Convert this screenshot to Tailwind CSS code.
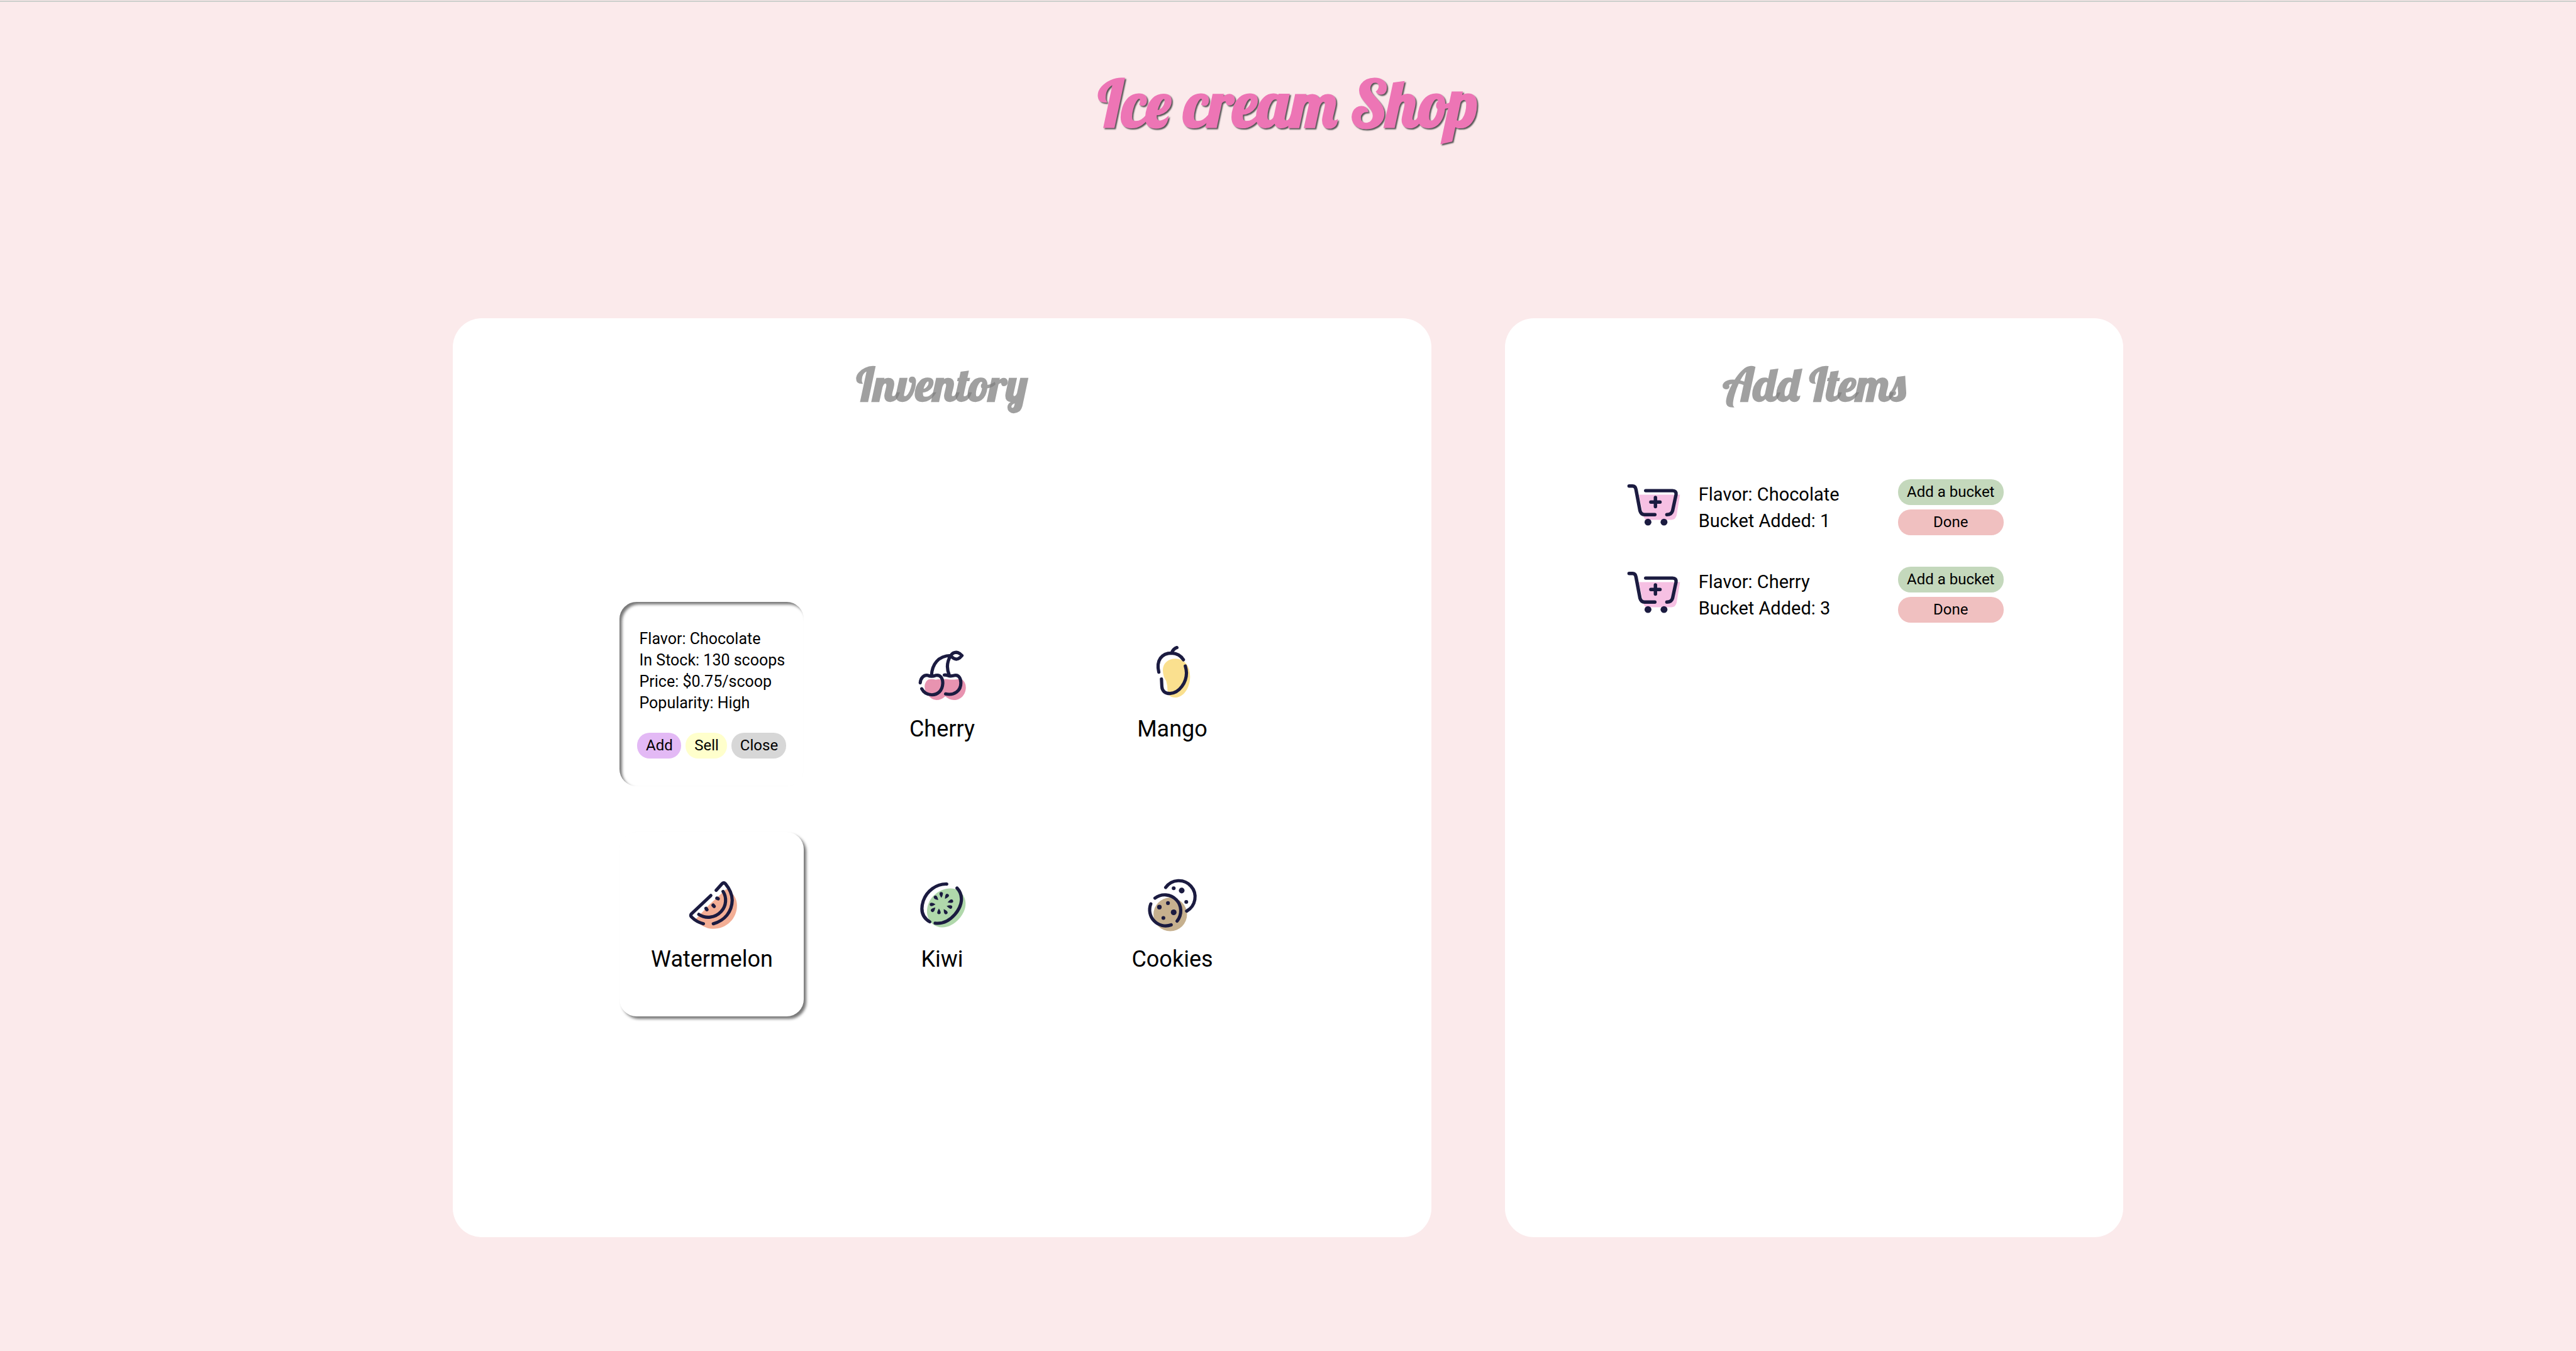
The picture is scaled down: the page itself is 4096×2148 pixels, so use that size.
<!DOCTYPE html>
<html lang="en">
<head>
<meta charset="utf-8">
<title>Ice cream Shop</title>
<script src="https://cdn.jsdelivr.net/npm/@tailwindcss/browser@4"></script>
</head>
<body class="min-h-screen bg-[#fbeaeb] font-[Roboto,sans-serif] text-black">
<div class="mt-px h-0.5 bg-[#cbcecb]"></div>
<header class="h-[503px] pt-[101px] text-center">
  <h1 class="font-[Lobster,'Liberation_Serif',serif] text-[102px] leading-[120px] font-bold text-[#ed75b5] [text-shadow:2px_2px_2px_#555]">Ice cream Shop</h1>
</header>
<main class="flex justify-center gap-[117px]">
  <section class="flex min-h-[68vh] w-[38%] flex-col items-center rounded-[46px] bg-white pt-[55px]">
    <h2 class="font-[Lobster,'Liberation_Serif',serif] text-[73px] leading-[100px] font-bold text-[#808080]/75">Inventory</h2>
    <div class="mt-[296px] grid grid-cols-[repeat(3,293px)] gap-[73px]">
      <article class="h-[293px] rounded-[27px] pt-[42px] shadow-[inset_4px_4px_4px_#777]">
        <div class="pl-[31px] text-[25px] leading-[34px]">
          <p>Flavor: Chocolate</p>
          <p>In Stock: 130 scoops</p>
          <p>Price: $0.75/scoop</p>
          <p>Popularity: High</p>
        </div>
        <div class="mt-[30px] flex gap-[7px] pl-7 text-[24px] leading-[41px]">
          <button class="h-[41px] w-[70px] rounded-[20px] bg-[#e3b9f5]">Add</button>
          <button class="h-[41px] w-[66px] rounded-[20px] bg-[#ffffcc]">Sell</button>
          <button class="h-[41px] w-[87px] rounded-[20px] bg-[#d7d7d7]">Close</button>
        </div>
      </article>
      <button class="flex h-[293px] flex-col items-center rounded-[27px] pt-[68px]">
        <svg class="size-[91px]" viewBox="144 62 300 300" fill="none" stroke="#1b1b40" stroke-width="17" stroke-linecap="round" stroke-linejoin="round">
          <path d="M225 244Q245 240 262 246Q280 240 295 246Q315 240 330 244Q348 246 378 243Q400 240 409 252Q421 268 420 290C418 326 392 352 358 352Q330 350 312 332Q292 352 266 352Q238 350 222 326Q204 306 204 280Q206 254 225 244Z" fill="#e893b0" stroke="none"/>
          <path d="M181 262C183 236 200 219 221 223Q240 232 262 223C288 217 300 240 299 266C297 302 274 325 242 325C218 324 198 311 189 293M307 221Q316 220 326 224Q340 229 362 223C382 219 394 238 394 262C394 305 358 330 314 320M240 224C243 165 275 120 341 119M334 224C318 187 320 152 341 119M341 119Q352 102 370 102Q387 103 400 119Q387 136 371 138Q354 137 341 119Z"/>
        </svg>
        <span class="mt-[21px] text-[36px] leading-[44px]">Cherry</span>
      </button>
      <button class="flex h-[293px] flex-col items-center rounded-[27px] pt-[68px]">
        <svg class="size-[91px]" viewBox="144 62 300 300" fill="none" stroke="#1b1b40" stroke-width="17" stroke-linecap="round" stroke-linejoin="round">
          <path d="M246 196C246 158 275 135 313 135C365 138 389 178 389 230C388 290 355 339 309 339C288 338 272 326 271 304Q271 276 264 253Q247 228 246 196Z" fill="#fae08f" stroke="none"/>
          <path d="M225 206C210 145 240 106 292 106C318 107 341 120 354 141M292 106Q300 84 320 77M239 242L241 281C242 306 260 318 283 318C334 316 370 258 370 210Q369 190 364 174"/>
        </svg>
        <span class="mt-[21px] text-[36px] leading-[44px]">Mango</span>
      </button>
      <button class="flex h-[293px] flex-col items-center rounded-[27px] pt-[68px] shadow-[4px_4px_4px_#777]">
        <svg class="size-[91px]" viewBox="384 272 300 300" fill="none" stroke="#1b1b40" stroke-width="17" stroke-linecap="round" stroke-linejoin="round">
          <path d="M612 345Q667 378 667 432C667 502 612 555 541 555Q485 552 450 505L520 430Z" fill="#f3ae95" stroke="none"/>
          <path d="M558 353L589 318Q598 310 606 318C628 345 642 374 642 405C641 465 603 512 543 528M530 380L427 478Q422 486 429 493Q456 520 491 528M594 359C614 390 612 435 584 464C552 498 504 503 467 479"/>
          <path d="M562 394L568 397M542 431L547 437M505 448L509 454" stroke-width="18"/>
        </svg>
        <span class="mt-[21px] text-[36px] leading-[44px]">Watermelon</span>
      </button>
      <button class="flex h-[293px] flex-col items-center rounded-[27px] pt-[68px]">
        <svg class="size-[91px]" viewBox="144 62 300 300" fill="none" stroke="#1b1b40" stroke-width="17" stroke-linecap="round" stroke-linejoin="round">
          <path d="M244 318C203 280 210 215 250 172C290 130 350 122 386 146C430 182 428 240 390 286C345 340 285 352 244 318Z" fill="#b0d8ab" stroke="none"/>
          <path d="M320 110C265 108 215 147 197 198C181 248 193 286 231 308M374 131C410 170 402 225 362 270C334 302 300 320 259 315"/>
          <g fill="#1b1b40" stroke="none">
            <path id="seed" d="M292 182Q282 168 282 161A9 9 0 0 1 300 161Q300 168 292 182Z"/>
            <use href="#seed" transform="rotate(36 292 214)"/>
            <use href="#seed" transform="translate(2 1) rotate(74 292 214)"/>
            <use href="#seed" transform="translate(-3 1) rotate(108 292 214)"/>
            <use href="#seed" transform="translate(-4 0) rotate(150 292 214)"/>
            <use href="#seed" transform="translate(-12 -8) rotate(182 292 214)"/>
            <use href="#seed" transform="translate(-9 -4) rotate(226 292 214)"/>
            <use href="#seed" transform="translate(1 2) rotate(270 292 214)"/>
            <use href="#seed" transform="translate(5 4) rotate(318 292 214)"/>
          </g>
        </svg>
        <span class="mt-[21px] text-[36px] leading-[44px]">Kiwi</span>
      </button>
      <button class="flex h-[293px] flex-col items-center rounded-[27px] pt-[68px]">
        <svg class="size-[91px]" viewBox="144 62 300 300" fill="none" stroke="#1b1b40" stroke-width="17" stroke-linecap="round" stroke-linejoin="round">
          <circle cx="285" cy="269" r="88" fill="#c6b08e" stroke="none"/>
          <path d="M261 128A85 85 0 1 1 371 252M205 184A84 84 0 0 1 321 304M183 214A84 84 0 0 0 290 324"/>
          <g fill="#1b1b40" stroke="none">
            <circle cx="303" cy="132" r="10"/><circle cx="345" cy="144" r="15"/><circle cx="369" cy="204" r="10"/>
            <circle cx="273" cy="210" r="10"/><circle cx="228" cy="231" r="12"/><circle cx="303" cy="258" r="15"/><circle cx="249" cy="288" r="10"/>
          </g>
        </svg>
        <span class="mt-[21px] text-[36px] leading-[44px]">Cookies</span>
      </button>
    </div>
  </section>

  <section class="flex min-h-[68vh] w-[24%] flex-col items-center rounded-[46px] bg-white pt-[55px]">
    <h2 class="font-[Lobster,'Liberation_Serif',serif] text-[73px] leading-[100px] font-bold text-[#808080]/75">Add Items</h2>
    <ul class="mt-[100px] flex w-[602px] flex-col gap-12">
      <li class="flex items-center">
        <svg class="size-[91px]" viewBox="0 0 100 100" fill="none" stroke="#1b1b40" stroke-width="6" stroke-linecap="round" stroke-linejoin="round">
          <path d="M24 28H96L90 64Q88 72 81 72H39Q34 72 32 66Z" fill="#f6c0e3" stroke="none"/>
          <path d="M7 13H13Q18 13 19 19L26 56Q28 63 34 63H52M36 21H83Q90 21 89 28L83 56Q81 63 73 63M45 41H61M53 33V49"/>
          <circle cx="40" cy="76" r="6" fill="#1b1b40" stroke="none"/><circle cx="68" cy="76" r="6" fill="#1b1b40" stroke="none"/>
        </svg>
        <div class="ml-[26px] flex-1 text-[29px] leading-[42px]">
          <p>Flavor: Chocolate</p>
          <p>Bucket Added: 1</p>
        </div>
        <div class="flex w-[168px] flex-col gap-[7px] text-[24px] leading-[41px]">
          <button class="h-[41px] rounded-[20px] bg-[#c4d8bc]">Add a bucket</button>
          <button class="h-[41px] rounded-[20px] bg-[#f0c0c0]">Done</button>
        </div>
      </li>
      <li class="flex items-center">
        <svg class="size-[91px]" viewBox="0 0 100 100" fill="none" stroke="#1b1b40" stroke-width="6" stroke-linecap="round" stroke-linejoin="round">
          <path d="M24 28H96L90 64Q88 72 81 72H39Q34 72 32 66Z" fill="#f6c0e3" stroke="none"/>
          <path d="M7 13H13Q18 13 19 19L26 56Q28 63 34 63H52M36 21H83Q90 21 89 28L83 56Q81 63 73 63M45 41H61M53 33V49"/>
          <circle cx="40" cy="76" r="6" fill="#1b1b40" stroke="none"/><circle cx="68" cy="76" r="6" fill="#1b1b40" stroke="none"/>
        </svg>
        <div class="ml-[26px] flex-1 text-[29px] leading-[42px]">
          <p>Flavor: Cherry</p>
          <p>Bucket Added: 3</p>
        </div>
        <div class="flex w-[168px] flex-col gap-[7px] text-[24px] leading-[41px]">
          <button class="h-[41px] rounded-[20px] bg-[#c4d8bc]">Add a bucket</button>
          <button class="h-[41px] rounded-[20px] bg-[#f0c0c0]">Done</button>
        </div>
      </li>
    </ul>
  </section>
</main>
</body>
</html>
